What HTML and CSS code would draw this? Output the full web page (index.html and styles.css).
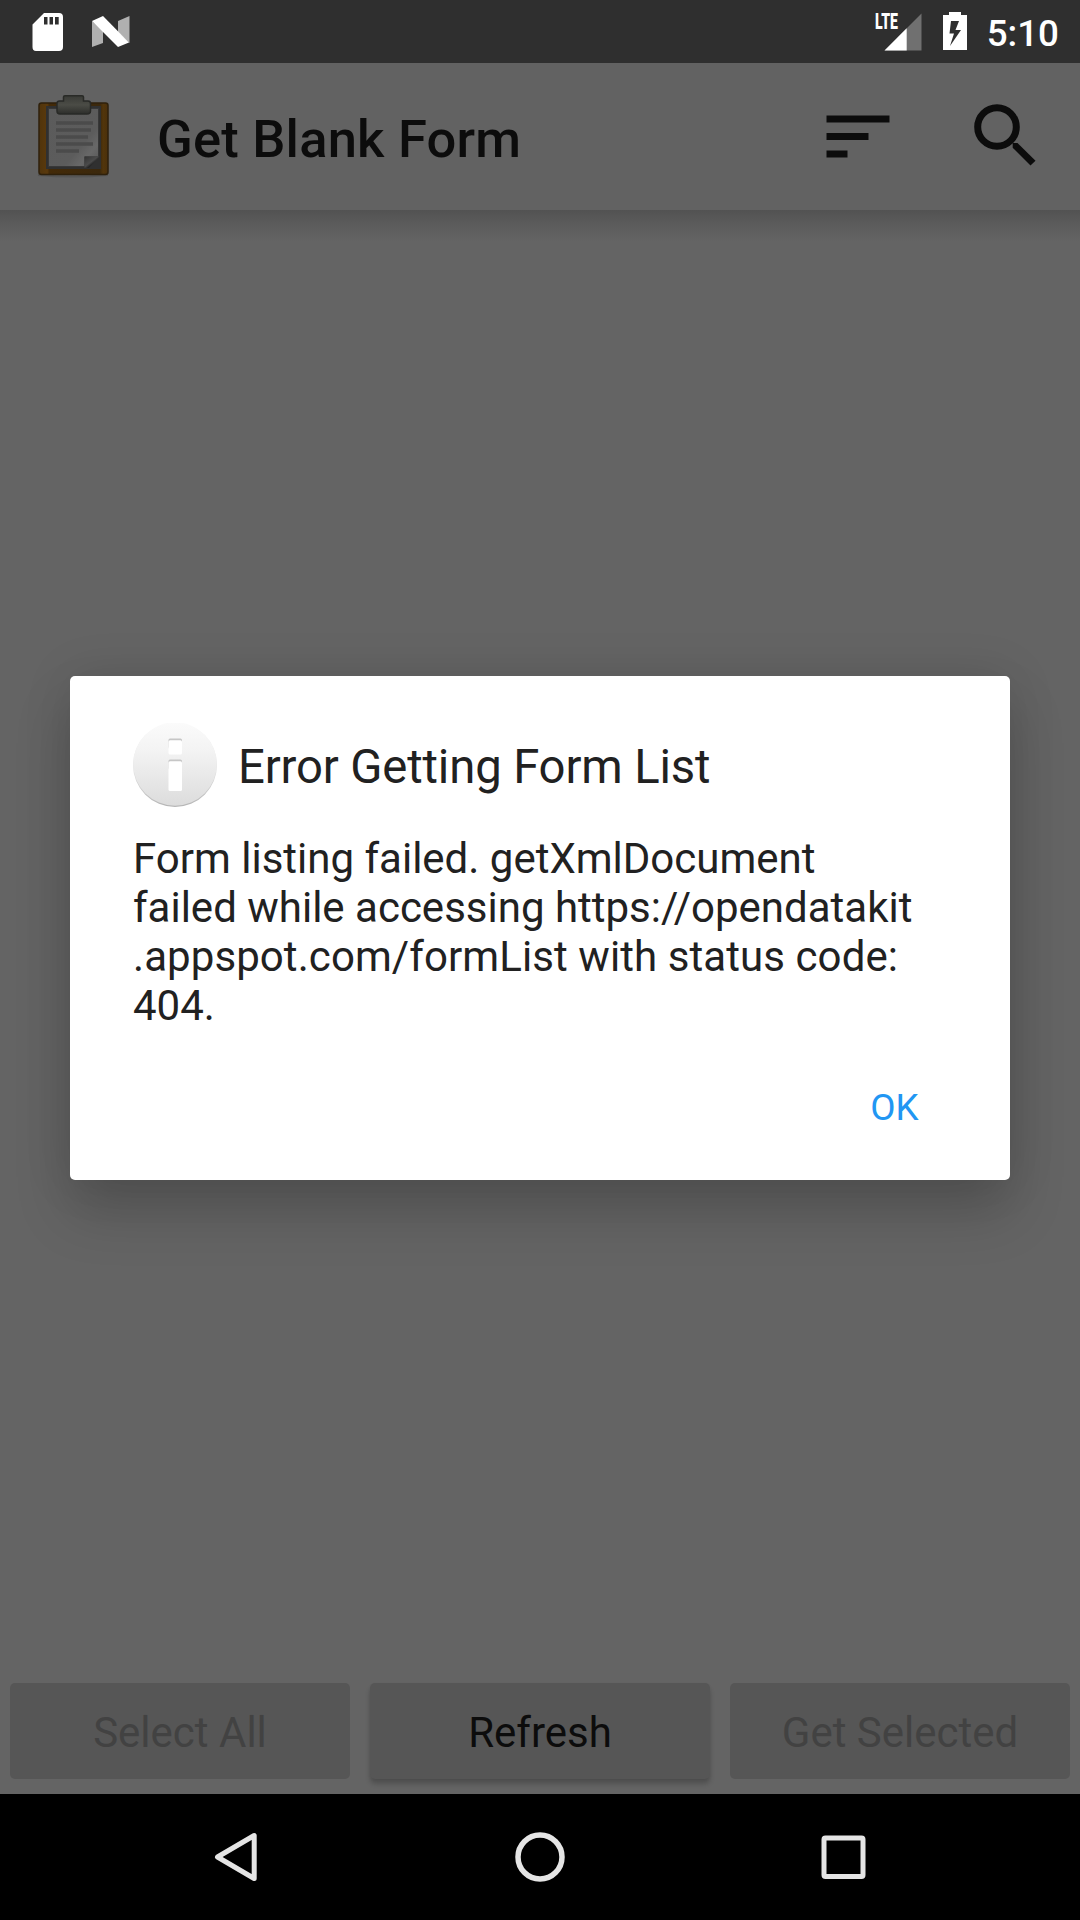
FILE: index.html
```html
<!DOCTYPE html>
<html lang="en">
<head>
<meta charset="utf-8">
<title>Get Blank Form</title>
<link rel="stylesheet" href="styles.css">
</head>
<body>
<div class="screen">
  <header class="status">
    <svg class="sd" width="32" height="40" viewBox="0 0 32 40"><path fill="#fff" fill-rule="evenodd" d="M12 1H27Q31 1 31 5V35Q31 39 27 39H4Q.5 39 .5 35V12.500ZM12 5V12.500H15.500V5ZM17.500 5V12.500H21V5ZM23 5V12.500H26.700V5Z"/></svg>
    <svg class="nougat" width="40" height="34" viewBox="0 0 40 34"><path fill="#b0b0b0" d="M1 6L12 16V28L1 32ZM27 6L38.500 1V28L27 17Z"/><path fill="#fff" d="M1 6L12 1L38 27.500L27 32Z"/></svg>
    <span class="spacer"></span>
    <span class="signal"><span class="lte">LTE</span><svg width="38" height="38" viewBox="0 0 38 38"><path fill="#707070" d="M37.500 .5V37.500H.5Z"/><path fill="#fff" d="M22.700 15.300V37.500H.5Z"/></svg></span>
    <svg class="battery" width="24" height="38" viewBox="0 0 24 38"><path fill="#fff" fill-rule="evenodd" d="M6 0H18V3H24V38H0V3H6ZM8 9L6.500 21.500H11L7 34L18 18H12.500L16 9Z"/></svg>
    <span class="clock">5:10</span>
  </header>
  <div class="toolbar">
    <svg class="clipboard" width="76" height="84" viewBox="0 0 76 84">
      <defs>
        <linearGradient id="wood"><stop offset="0" stop-color="#50340c"/><stop offset=".12" stop-color="#5a390c"/><stop offset=".15" stop-color="#432a08"/><stop offset=".88" stop-color="#3b280c"/><stop offset=".93" stop-color="#52350b"/><stop offset="1" stop-color="#4a300c"/></linearGradient>
        <linearGradient id="clip" x2="0" y2="1"><stop offset="0" stop-color="#393a36"/><stop offset=".5" stop-color="#4b4c46"/><stop offset="1" stop-color="#2d2e2b"/></linearGradient>
        <linearGradient id="paper" x2="1" y2="1"><stop offset="0" stop-color="#5b5b5b"/><stop offset=".65" stop-color="#5c5c5c"/><stop offset=".8" stop-color="#686868"/><stop offset="1" stop-color="#555"/></linearGradient>
        <linearGradient id="fold" x2="1" y2="1"><stop offset="0" stop-color="#333"/><stop offset=".45" stop-color="#4b4b4b"/><stop offset=".6" stop-color="#252525"/><stop offset="1" stop-color="#444"/></linearGradient>
      </defs>
      <path d="M3 80Q38 83 73 80" stroke="#555" stroke-width="2" fill="none"/>
      <rect x="4" y="8" width="69" height="71.500" rx="2.500" fill="url(#wood)" stroke="#2f210c" stroke-width="1.500"/>
      <path d="M11 11H66V74H11Z" fill="#303030"/>
      <path d="M13.500 13.500H63.500V71.500H13.500Z" fill="url(#paper)" stroke="#383838"/>
      <path d="M21 28H58M21 35H56M21 42H53M21 49H58M21 56H44" stroke="#4b4b4b" stroke-width="3.500"/>
      <path d="M49.500 61.500H64.500V73H49.500Z" fill="#303030"/>
      <path d="M49.500 61.500H64.500L54 73H49.500Z" fill="url(#fold)"/>
      <path d="M28.500 5.500V2Q28.500 .8 30 .8H47Q48.500 .8 48.500 2V6H53Q55.500 6 55.500 8.500V16Q55.500 19 52 19H25Q22 19 22 16V8.500Q22 6 24.500 6H28.500Z" fill="url(#clip)" stroke="#292a27" stroke-width="1.500"/>
    </svg>
    <h1 class="title">Get Blank Form</h1>
    <span class="spacer"></span>
    <svg class="sort" width="64" height="44" viewBox="0 0 64 44"><path fill="#0c0c0c" d="M.5 1.500H63.500V8.500H.5ZM.5 19H42.500V26H.5ZM.5 36.500H21.500V43.500H.5Z"/></svg>
    <svg class="search" width="62" height="62" viewBox="0 0 62 62"><circle cx="23" cy="23" r="19.300" fill="none" stroke="#0c0c0c" stroke-width="7"/><path fill="#0c0c0c" d="M38.700 39H43.500L61.500 56.700L56.500 61.500L38.700 43.700Z"/></svg>
  </div>
  <main class="content"></main>
  <div class="actions">
    <button class="btn" disabled>Select All</button>
    <button class="btn raised">Refresh</button>
    <button class="btn" disabled>Get Selected</button>
  </div>
  <nav class="nav">
    <svg width="50" height="52" viewBox="0 0 50 52"><path fill="none" stroke="#e5e5e5" stroke-width="5" stroke-linejoin="round" d="M43.200 4.500V47.500L6.500 26Z"/></svg>
    <svg width="50" height="52" viewBox="0 0 50 52"><circle cx="25" cy="26" r="22" fill="none" stroke="#e5e5e5" stroke-width="5.500"/></svg>
    <svg width="50" height="52" viewBox="0 0 50 52"><rect x="5" y="7" width="39" height="38.500" rx="1.500" fill="none" stroke="#e5e5e5" stroke-width="5"/></svg>
  </nav>
  <section class="dialog" role="dialog">
    <div class="heading">
      <svg width="84" height="84" viewBox="0 0 84 84">
        <defs><linearGradient id="disc" x2="0" y2="1"><stop offset="0" stop-color="#fbfbfb"/><stop offset=".35" stop-color="#f3f3f3"/><stop offset="1" stop-color="#dcdcdc"/></linearGradient>
        <linearGradient id="rim" x2="0" y2="1"><stop offset=".5" stop-color="#e6e6e6"/><stop offset="1" stop-color="#b4b4b4"/></linearGradient></defs>
        <circle cx="42" cy="42" r="42" fill="url(#rim)"/><circle cx="42" cy="41" r="41.800" fill="url(#disc)"/>
        <rect x="35.500" y="15.500" width="13.500" height="10" rx="1.500" fill="#c6c6c6"/>
        <rect x="35.500" y="36.500" width="13.500" height="10" rx="1.500" fill="#c6c6c6"/>
        <rect x="35.500" y="17.300" width="13.500" height="14.200" rx="1.500" fill="#fff"/>
        <rect x="35.500" y="38.300" width="13.500" height="29.700" rx="1.500" fill="#fff"/>
      </svg>
      <h2>Error Getting Form List</h2>
    </div>
    <p class="message">Form listing failed. getXmlDocument<br>failed while accessing https://opendatakit<br><span class="url-tail">.appspot.com/formList with status code:</span><br>404.</p>
    <button class="ok">OK</button>
  </section>
</div>
</body>
</html>
```
FILE: styles.css
```css
* { box-sizing: border-box; }
body { margin: 0; font-family: Roboto, sans-serif; }
svg { display: block; flex: none; }
button { border: 0; background: none; padding: 0; font-family: inherit; }
.screen {
  position: relative;
  display: flex;
  flex-direction: column;
  width: 1080px;
  height: 1920px;
  overflow: hidden;
  background: #646464;
}
.spacer { flex: 1; }
.status {
  display: flex;
  height: 63px;
  padding: 12px 21px 0 32px;
  background: #2f2f2f;
  color: #fff;
}
.nougat { margin: 3px 0 0 27px; }
.signal { display: flex; margin: 1px 21px 0 0; }
.lte {
  width: 24px;
  margin: 1px -15px 0 0;
  font-size: 22px;
  font-weight: 900;
  line-height: 16px;
  transform: scaleX(.64);
  transform-origin: left top;
  z-index: 1;
}
.clock {
  margin-left: 20px;
  font-size: 36.75px;
  font-weight: 500;
  line-height: 43px;
}
.toolbar {
  display: flex;
  height: 147px;
  padding: 0 44px 0 35px;
  background: #626262;
}
.clipboard { margin-top: 32px; }
.title {
  margin: 0 0 0 46px;
  color: #0c0c0c;
  font-size: 52.5px;
  font-weight: 500;
  letter-spacing: .2px;
  line-height: 152px;
}
.sort { margin-top: 51px; }
.search { margin: 41px 0 0 84px; }
.content {
  flex: 1;
  background: linear-gradient(#525252, #5c5c5c 15px, #646464 32px);
}
.actions { display: flex; gap: 20px; padding: 0 10px 15px; }
.btn {
  flex: 1;
  height: 96px;
  border-radius: 5px;
  background: #565656;
  color: #0c0c0c;
  font-size: 42px;
  line-height: 96px;
  padding-top: 2px;
}
.btn:disabled { color: #424242; }
.raised { box-shadow: 0 5px 5px rgba(0, 0, 0, .2), 0 1px 3px rgba(0, 0, 0, .05); }
.nav {
  display: flex;
  justify-content: center;
  gap: 254px;
  height: 126px;
  padding-top: 37px;
  background: #000;
}
.dialog {
  position: absolute;
  top: 676px;
  left: 70px;
  width: 940px;
  height: 504px;
  padding: 47px 63px 0;
  display: flex;
  flex-direction: column;
  border-radius: 5px;
  background: #fff;
  color: #212121;
  box-shadow: 0 32px 55px rgba(0, 0, 0, .18), 0 0 50px rgba(0, 0, 0, .1);
}
.heading { display: flex; align-items: center; gap: 21px; }
h2 { margin: 3px 0 0; font-size: 47.25px; font-weight: 400; line-height: 56px; letter-spacing: -.14px; }
.message { margin: 27px 0 0; font-size: 42px; line-height: 49px; white-space: nowrap; }
.url-tail { letter-spacing: .08px; }
.ok {
  align-self: flex-end;
  width: 105px;
  margin: 46px 0 0;
  color: #2196f3;
  font-size: 36.75px;
  line-height: 63px;
}
```
